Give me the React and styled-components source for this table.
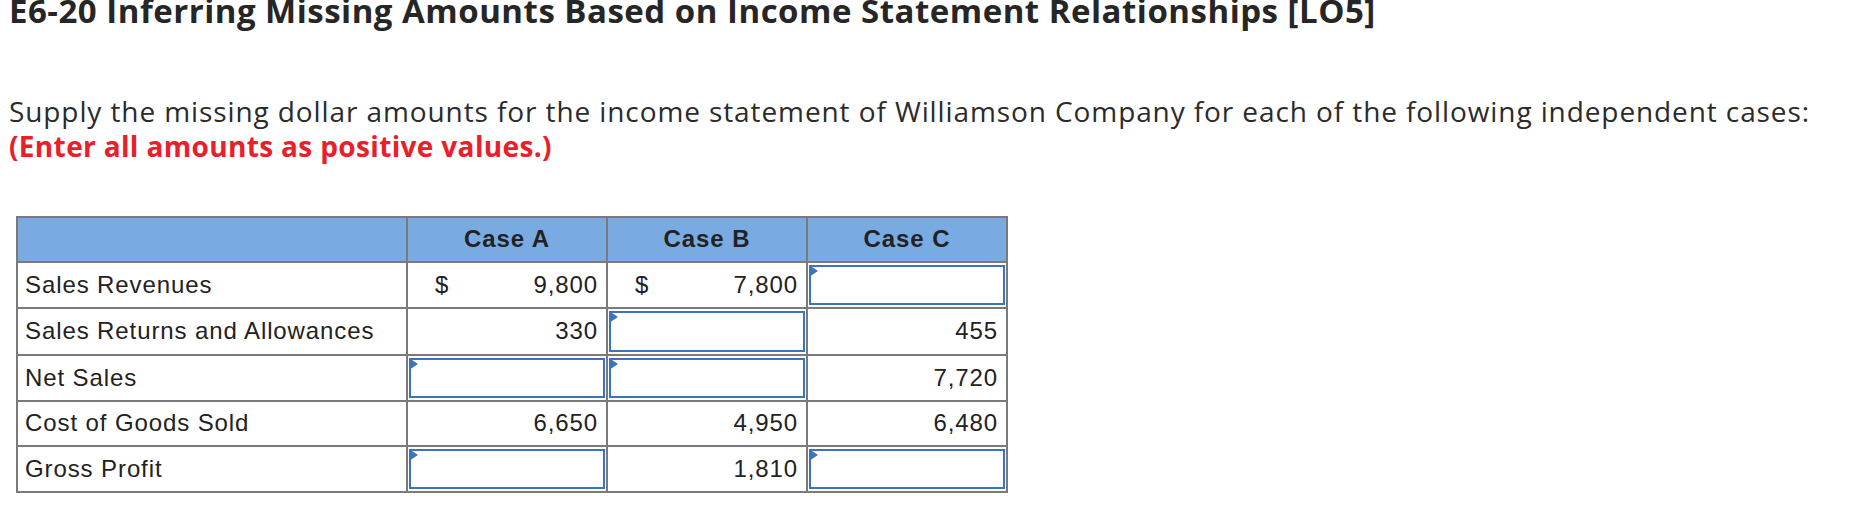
import styled, { createGlobalStyle } from "styled-components";

const GlobalStyle = createGlobalStyle`
  body {
    margin: 0;
    background: #fff;
  }
`;

const rows = [
  { label: "Sales Revenues", a: { dollar: true, value: "9,800" }, b: { dollar: true, value: "7,800" }, c: { input: true } },
  { label: "Sales Returns and Allowances", a: { value: "330" }, b: { input: true }, c: { value: "455" } },
  { label: "Net Sales", a: { input: true }, b: { input: true }, c: { value: "7,720" } },
  { label: "Cost of Goods Sold", a: { value: "6,650" }, b: { value: "4,950" }, c: { value: "6,480" } },
  { label: "Gross Profit", a: { input: true }, b: { value: "1,810" }, c: { input: true } },
];

const Amount = ({ cell }) => {
  if (cell.input) {
    return (
      <InputCell>
        <InputBox />
      </InputCell>
    );
  }
  return (
    <ValueCell>
      <ValueWrap>
        <span>{cell.dollar ? "$" : ""}</span>
        <span>{cell.value}</span>
      </ValueWrap>
    </ValueCell>
  );
};

const App = () => {
  return (
    <Page>
      <GlobalStyle />
      <Title>E6-20 Inferring Missing Amounts Based on Income Statement Relationships [LO5]</Title>
      <Intro>
        Supply the missing dollar amounts for the income statement of Williamson Company for each of the following independent cases:
        <br />
        <Note>(Enter all amounts as positive values.)</Note>
      </Intro>
      <Table>
        <thead>
          <tr>
            <HeadCell $wide />
            <HeadCell>Case A</HeadCell>
            <HeadCell>Case B</HeadCell>
            <HeadCell>Case C</HeadCell>
          </tr>
        </thead>
        <tbody>
          {rows.map((r) => (
            <tr key={r.label}>
              <LabelCell>{r.label}</LabelCell>
              <Amount cell={r.a} />
              <Amount cell={r.b} />
              <Amount cell={r.c} />
            </tr>
          ))}
        </tbody>
      </Table>
    </Page>
  );
};

const Page = styled.div`
  padding: 0 0 20px 9px;
  color: #2b2b2b;
`;

const Title = styled.h1`
  margin: -6px 0 0 0;
  font-family: "Open Sans", Lato, sans-serif;
  font-weight: 700;
  font-size: 33px;
  line-height: 33px;
  letter-spacing: 0.5px;
  color: #262626;
`;

const Intro = styled.p`
  margin: 67px 0 0 0;
  font-family: "Open Sans", Lato, sans-serif;
  font-size: 28px;
  line-height: 35px;
  letter-spacing: 0.9px;
  color: #2b2b2b;
`;

const Note = styled.span`
  font-weight: 700;
  letter-spacing: 0.35px;
  color: #e8202a;
`;

const Table = styled.table`
  margin: 52px 0 0 7px;
  border-collapse: collapse;
  font-family: "Liberation Sans", Arial, sans-serif;
  font-size: 24px;
  letter-spacing: 0.9px;
  color: #222;
`;

const HeadCell = styled.th`
  width: ${(p) => (p.$wide ? "388px" : "198px")};
  height: 42.5px;
  padding: 0;
  background: #79abe2;
  border: 2px solid #7a7a7a;
  font-weight: 700;
  text-align: center;
`;

const LabelCell = styled.td`
  height: 42.5px;
  padding: 0 0 0 7px;
  border: 2px solid #7a7a7a;
  text-align: left;
`;

const ValueCell = styled.td`
  height: 42.5px;
  padding: 0 8px 0 27px;
  border: 2px solid #7a7a7a;
`;

const ValueWrap = styled.div`
  display: flex;
  justify-content: space-between;
  align-items: center;
`;

const InputCell = styled.td`
  height: 42.5px;
  padding: 1px;
  border: 2px solid #7a7a7a;
`;

const InputBox = styled.div`
  position: relative;
  height: 36.5px;
  border: 2px solid #3b74ba;

  &::before {
    content: "";
    position: absolute;
    top: -2px;
    left: -2px;
    border-top: 6px solid transparent;
    border-bottom: 6px solid transparent;
    border-left: 9px solid #3b74ba;
  }
`;

export default App;
